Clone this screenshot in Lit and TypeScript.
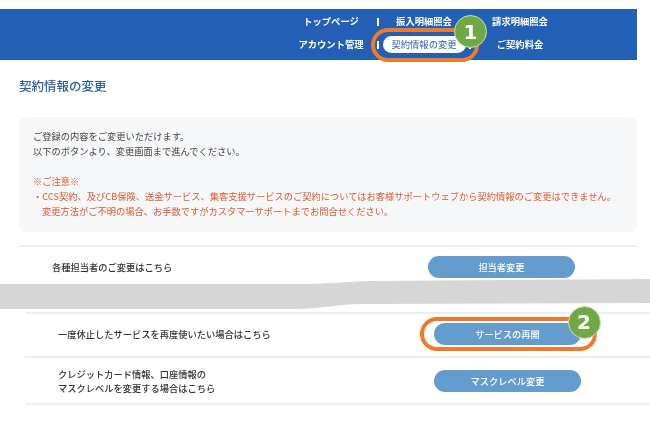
import { LitElement, html, css } from "lit";
import { customElement } from "lit/decorators.js";

@customElement("app-root")
export class AppRoot extends LitElement {
  static styles = css`
    :host {
      display: block;
      width: 650px;
      height: 421px;
      overflow: hidden;
      background: #fff;
      font-family: "Noto Sans CJK JP", "Noto Sans", sans-serif;
      color: #333;
      filter: blur(0.3px);
    }
    .header {
      margin-top: 9px;
      width: 637px;
      height: 51px;
      box-sizing: border-box;
      background: #225fb5;
      display: flex;
      justify-content: flex-start;
      padding: 3px 0 0 286px;
    }
    .nav {
      display: grid;
      grid-template-columns: 90px 4px 88px 4px 96px;
      grid-template-rows: 20px 25px;
      align-items: center;
      justify-items: center;
      color: #fff;
      font-size: 9.3px;
      font-weight: 700;
      line-height: 1;
      white-space: nowrap;
    }
    .sep {
      width: 1.5px;
      height: 8px;
      background: #fff;
    }
    .pill-wrap {
      position: relative;
      display: flex;
    }
    .pill {
      width: 83px;
      height: 17px;
      border-radius: 9px;
      background: #fff;
      color: #225fb5;
      font-weight: 400;
      display: flex;
      align-items: center;
      justify-content: center;
    }
    .ring {
      position: absolute;
      box-sizing: border-box;
      border-style: solid;
      border-color: #ee7a2d;
      border-radius: 18px;
      pointer-events: none;
    }
    .ring-1 {
      border-width: 4.5px;
      left: -12px;
      right: -13px;
      top: -8px;
      bottom: -9px;
    }
    .ring-2 {
      border-width: 4px;
      left: -14px;
      right: -16px;
      top: -6px;
      bottom: -6px;
    }
    .badge {
      position: absolute;
      box-sizing: border-box;
      width: 33px;
      height: 33px;
      border-radius: 50%;
      background: #70a845;
      border: 1.5px solid #cfe0c0;
      color: #fff;
      font-family: "DejaVu Sans", sans-serif;
      font-size: 20px;
      font-weight: 700;
      display: flex;
      align-items: center;
      justify-content: center;
      line-height: 1;
    }
    .badge-1 {
      left: 71.5px;
      top: -21px;
    }
    .badge-2 {
      left: 133.5px;
      top: -17.5px;
    }
    .title {
      margin: 17px 0 0 19px;
      font-size: 12.5px;
      line-height: 18px;
      font-weight: 500;
      color: #2f5f9c;
    }
    .notice {
      margin: 22px 0 0 19px;
      width: 618px;
      height: 115px;
      box-sizing: border-box;
      padding: 12px 14px 0;
      background: #f6f7f9;
      border-radius: 7px;
      font-size: 9.25px;
      line-height: 15px;
      color: #444;
    }
    .notice p {
      margin: 0;
    }
    .gap {
      height: 15px;
    }
    .warn {
      color: #e0592a;
    }
    .indent {
      padding-left: 9px;
    }
    .rows-a {
      margin: 13px 0 0 19px;
      width: 618px;
    }
    .rows-b {
      margin-left: 25px;
    }
    .row {
      display: grid;
      grid-template-columns: 409px 147px;
      align-items: center;
      box-sizing: border-box;
      border-top: 2px solid #eeeeee;
      font-size: 9.25px;
      line-height: 14px;
      font-weight: 500;
      color: #333;
    }
    .row-label {
      padding-left: 33px;
    }
    .r1 {
      height: 34px;
      padding: 9px 0 3px;
      align-items: start;
    }
    .r1 .row-label {
      padding-top: 4px;
    }
    .r2 {
      height: 44px;
      padding: 0 0 2px;
    }
    .r3 {
      height: 49px;
      border-bottom: 2px solid #eeeeee;
    }
    .btn-wrap {
      position: relative;
      display: flex;
    }
    .btn {
      width: 147px;
      height: 22px;
      border-radius: 11px;
      background: #659cce;
      color: #fff;
      font-size: 9.25px;
      font-weight: 500;
      display: flex;
      align-items: center;
      justify-content: center;
    }
    .tear {
      display: block;
      width: 650px;
      height: 33px;
    }
    .tear path {
      fill: #d6d6d6;
    }
  `;

  render() {
    return html`
      <div class="header">
        <div class="nav">
          <span>トップページ</span><span class="sep"></span><span>振入明細照会</span><span class="sep"></span><span>請求明細照会</span>
          <span>アカウント管理</span><span class="sep"></span>
          <span class="pill-wrap">
            <span class="ring ring-1"></span>
            <span class="pill">契約情報の変更</span>
            <span class="badge badge-1">1</span>
          </span>
          <span class="sep"></span><span>ご契約料金</span>
        </div>
      </div>
      <div class="title">契約情報の変更</div>
      <div class="notice">
        <p>ご登録の内容をご変更いただけます。</p>
        <p>以下のボタンより、変更画面まで進んでください。</p>
        <div class="gap"></div>
        <p class="warn">※ご注意※</p>
        <p class="warn">・CCS契約、及びCB保険、送金サービス、集客支援サービスのご契約についてはお客様サポートウェブから契約情報のご変更はできません。</p>
        <p class="warn indent">変更方法がご不明の場合、お手数ですがカスタマーサポートまでお問合せください。</p>
      </div>
      <div class="rows-a">
        <div class="row r1">
          <div class="row-label">各種担当者のご変更はこちら</div>
          <div class="btn-wrap"><div class="btn">担当者変更</div></div>
        </div>
      </div>
      <svg class="tear" viewBox="0 0 650 33" aria-hidden="true">
        <path d="M0 5 L300 5 C325 5 340 3 370 2 L650 0 L650 24 L362 25 C340 25 325 29 300 30 L0 30 Z"></path>
      </svg>
      <div class="rows-b">
        <div class="row r2">
          <div class="row-label">一度休止したサービスを再度使いたい場合はこちら</div>
          <div class="btn-wrap">
            <span class="ring ring-2"></span>
            <div class="btn">サービスの再開</div>
            <span class="badge badge-2">2</span>
          </div>
        </div>
        <div class="row r3">
          <div class="row-label">クレジットカード情報、口座情報の<br />マスクレベルを変更する場合はこちら</div>
          <div class="btn-wrap"><div class="btn">マスクレベル変更</div></div>
        </div>
      </div>
    `;
  }
}
